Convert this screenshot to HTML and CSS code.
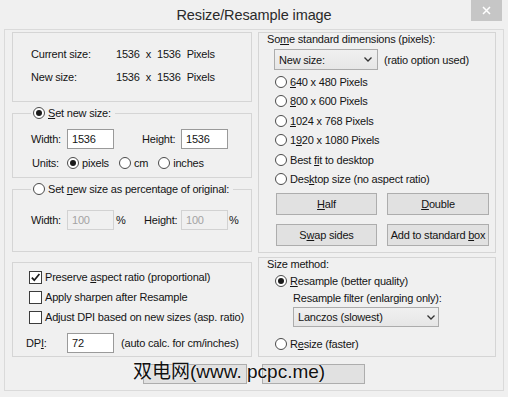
FILE: index.html
```html
<!DOCTYPE html>
<html lang="en">
<head>
    <meta charset="UTF-8">
    <meta name="viewport" content="width=device-width, initial-scale=1.0">
    <title>Resize/Resample image</title>

    <link rel="stylesheet" href="styles.css">
</head>
<body>

    <div class="window">

        <div class="titlebar">
            <span class="title">Resize/Resample image</span>
            <span class="close">
                <svg width="9" height="9" viewBox="0 0 9 9"><path d="M1 1 L8 8 M8 1 L1 8" stroke="#fff" stroke-width="1.5"/></svg>
            </span>
        </div>

        <div class="client">

            <div class="columns">

                <div class="col-left">

                    <div class="box info">
                        <div class="info-row"><span class="info-label">Current size:</span><span>1536</span><span>x</span><span>1536</span><span>Pixels</span></div>
                        <div class="info-row"><span class="info-label">New size:</span><span>1536</span><span>x</span><span>1536</span><span>Pixels</span></div>
                    </div>

                    <fieldset class="group new-size">
                        <legend><span class="radio on"></span><span><u>S</u>et new size:</span></legend>
                        <div class="g-body">
                            <div class="field-row">
                                <span class="field-label">Width:</span>
                                <span class="edit">1536</span>
                                <span class="field-label second">Height:</span>
                                <span class="edit">1536</span>
                            </div>
                            <div class="units-row">
                                <span class="units-label">Units:</span>
                                <span class="opt"><span class="radio on"></span>pixels</span>
                                <span class="opt"><span class="radio"></span>cm</span>
                                <span class="opt"><span class="radio"></span>inches</span>
                            </div>
                        </div>
                    </fieldset>

                    <fieldset class="group percent">
                        <legend><span class="radio"></span><span>Set <u>n</u>ew size as percentage of original:</span></legend>
                        <div class="g-body">
                            <div class="field-row">
                                <span class="field-label">Width:</span>
                                <span class="edit disabled">100</span>
                                <span class="pct">%</span>
                                <span class="field-label">Height:</span>
                                <span class="edit disabled">100</span>
                                <span class="pct last">%</span>
                            </div>
                        </div>
                    </fieldset>

                    <div class="box options">
                        <div class="check-row"><span class="check">
                            <svg width="11" height="11" viewBox="0 0 11 11"><path d="M1.8 5.6 L4.3 8.2 L9.4 2" fill="none" stroke="#1a1a1a" stroke-width="1.7"/></svg>
                        </span><span>Preserve <u>a</u>spect ratio (proportional)</span></div>
                        <div class="check-row"><span class="check"></span><span>Apply sharpen after Resample</span></div>
                        <div class="check-row"><span class="check"></span><span>Adjust DPI based on new sizes (asp. ratio)</span></div>
                        <div class="dpi-row">
                            <span class="dpi-label">DP<u>I</u>:</span>
                            <span class="edit">72</span>
                            <span class="dpi-note">(auto calc. for cm/inches)</span>
                        </div>
                    </div>

                </div>

                <div class="col-right">

                    <div class="box standard">
                        <div class="box-title">So<u>m</u>e standard dimensions (pixels):</div>
                        <div class="combo-row">
                            <span class="combo size-combo">New size:
                                <svg width="8" height="5" viewBox="0 0 8 5"><path d="M0.5 0.5 L4 4 L7.5 0.5" fill="none" stroke="#333" stroke-width="1.3"/></svg>
                            </span>
                            <span class="combo-note">(ratio option used)</span>
                        </div>
                        <div class="std-list">
                            <div class="opt-row"><span class="radio"></span><span><u>6</u>40 x 480 Pixels</span></div>
                            <div class="opt-row"><span class="radio"></span><span><u>8</u>00 x 600 Pixels</span></div>
                            <div class="opt-row"><span class="radio"></span><span><u>1</u>024 x 768 Pixels</span></div>
                            <div class="opt-row"><span class="radio"></span><span>1<u>9</u>20 x 1080 Pixels</span></div>
                            <div class="opt-row"><span class="radio"></span><span>Best <u>fi</u>t to desktop</span></div>
                            <div class="opt-row"><span class="radio"></span><span>Des<u>k</u>top size (no aspect ratio)</span></div>
                        </div>
                        <div class="btn-row">
                            <button class="btn"><u>H</u>alf</button>
                            <button class="btn"><u>D</u>ouble</button>
                        </div>
                        <div class="btn-row second">
                            <button class="btn">S<u>w</u>ap sides</button>
                            <button class="btn">Add to standard <u>b</u>ox</button>
                        </div>
                    </div>

                    <div class="box method">
                        <div class="box-title">Size method:</div>
                        <div class="opt-row method-opt"><span class="radio on"></span><span><u>R</u>esample (better quality)</span></div>
                        <div class="filter-label">Resample filter (enlarging only):</div>
                        <span class="combo filter-combo">Lanczos (slowest)
                            <svg width="8" height="5" viewBox="0 0 8 5"><path d="M0.5 0.5 L4 4 L7.5 0.5" fill="none" stroke="#333" stroke-width="1.3"/></svg>
                        </span>
                        <div class="opt-row method-opt resize"><span class="radio"></span><span>R<u>e</u>size (faster)</span></div>
                    </div>

                </div>

            </div>

            <div class="actions">
                <button class="btn ok"></button>
                <button class="btn cancel"></button>
            </div>

        </div>

        <div class="watermark">双电网(www. pcpc.me)</div>

    </div>

</body>
</html>
```

FILE: styles.css
```css
* {
    margin: 0px;
    padding: 0px;
    box-sizing: border-box;
}
html, body {
    width: 100%;
    height: 100%;
}
body {
    background-color: #f0f0f0;
    font-family: "Liberation Sans", Arial, sans-serif;
    font-size: 11px;
    letter-spacing: -0.2px;
    color: #141414;
}
u {
    text-decoration-thickness: 1px;
    text-underline-offset: 1px;
}
.window {
    width: 508px;
    height: 397px;
    position: relative;
    background-color: #f0f0f0;
}
.titlebar {
    height: 29px;
    display: flex;
    align-items: center;
    justify-content: center;
}
.title {
    font-size: 14.5px;
    letter-spacing: -0.1px;
    color: #2a2a2a;
    padding-top: 1px;
}
.close {
    position: absolute;
    top: 0px;
    right: 6px;
    width: 31px;
    height: 21px;
    background-color: #c6c6c6;
    display: flex;
    align-items: center;
    justify-content: center;
}
.client {
    margin: 0px 4px;
    height: 362px;
    border: 1px solid #dadada;
    padding: 2px 0px 0px 7px;
}
.columns {
    display: flex;
    gap: 6px;
}
.col-left {
    width: 240px;
    display: flex;
    flex-direction: column;
}
.col-right {
    width: 238px;
    display: flex;
    flex-direction: column;
}
.box {
    border: 1px solid #d5d5d5;
}
.info {
    height: 70px;
    padding: 13px 0px 0px 18px;
    display: flex;
    flex-direction: column;
    gap: 7px;
}
.info-row {
    display: flex;
    line-height: 16px;
}
.info-row span + span {
    margin-left: 6px;
}
.info-label {
    width: 79px;
}
.group {
    border: 1px solid #d5d5d5;
    min-width: 0px;
    margin-top: 4px;
}
.group legend {
    margin-left: 18px;
    padding: 0px 4px 0px 2px;
    height: 14px;
    line-height: 14px;
    display: flex;
    align-items: center;
}
.group legend .radio {
    margin-right: 3px;
}
.new-size .g-body {
    padding: 9px 0px 6px 18px;
}
.percent .g-body {
    padding: 14px 0px 21px 18px;
}
.field-row {
    display: flex;
    align-items: center;
    height: 20px;
}
.field-label {
    width: 36px;
}
.field-label.second {
    width: 39px;
    margin-left: 28px;
}
.percent .field-label + .edit + .pct + .field-label {
    width: 37px;
}
.pct {
    width: 30px;
    padding-left: 2px;
}
.pct.last {
    width: auto;
    padding-left: 1px;
}
.edit {
    width: 47px;
    height: 20px;
    border: 1px solid #9a9a9a;
    background-color: #ffffff;
    padding: 0px 4px;
    line-height: 18px;
}
.edit.disabled {
    border-color: #d2d2d2;
    background-color: #f0f0f0;
    color: #a3a3a3;
}
.units-row {
    display: flex;
    align-items: center;
    height: 16px;
    margin-top: 6px;
}
.units-label {
    width: 35px;
    margin-left: 1px;
}
.opt {
    display: flex;
    align-items: center;
    margin-right: 10px;
}
.radio {
    width: 12px;
    height: 12px;
    flex: none;
    border: 1px solid #4a4a4a;
    border-radius: 50%;
    background-color: #ffffff;
    display: inline-flex;
    align-items: center;
    justify-content: center;
    margin-right: 3px;
}
.radio.on::before {
    content: "";
    width: 6px;
    height: 6px;
    border-radius: 50%;
    background-color: #1a1a1a;
}
.options {
    margin-top: 10px;
    padding: 6px 0px 3px 16px;
    display: flex;
    flex-direction: column;
    gap: 4px;
}
.check-row {
    display: flex;
    align-items: center;
    height: 16px;
    line-height: 16px;
}
.check {
    width: 13px;
    height: 13px;
    flex: none;
    border: 1px solid #3c3c3c;
    background-color: #ffffff;
    margin-right: 3px;
    display: flex;
    align-items: center;
    justify-content: center;
}
.dpi-row {
    display: flex;
    align-items: center;
    height: 20px;
    margin-top: 4px;
    margin-left: -3px;
}
.dpi-label {
    width: 41px;
}
.dpi-note {
    margin-left: 7px;
}
.standard {
    padding: 0px 0px 6px 8px;
}
.box-title {
    line-height: 12px;
    height: 12px;
}
.combo-row {
    display: flex;
    align-items: center;
    margin-top: 4px;
    padding-left: 7px;
}
.combo {
    height: 21px;
    border: 1px solid #acacac;
    background: linear-gradient(#f0f0f0, #e6e6e6);
    display: flex;
    align-items: center;
    justify-content: space-between;
    padding: 0px 5px 0px 4px;
}
.size-combo {
    width: 104px;
}
.combo-note {
    margin-left: 6px;
}
.std-list {
    margin-top: 2px;
    padding-left: 8px;
}
.opt-row {
    display: flex;
    align-items: center;
    height: 19.5px;
}
.btn-row {
    display: flex;
    gap: 10px;
    margin-top: 4px;
    padding-left: 9px;
}
.btn-row.second {
    margin-top: 9px;
}
.btn {
    width: 101px;
    height: 22px;
    border: 1px solid #adadad;
    background-color: #e1e1e1;
    font: inherit;
    letter-spacing: inherit;
    color: inherit;
}
.btn-row .btn + .btn {
    width: 102px;
}
.method {
    margin-top: 4px;
    padding: 0px 0px 4px 8px;
}
.method-opt {
    height: 16px;
    margin-top: 3px;
    padding-left: 8px;
}
.method-opt.resize {
    margin-top: 9px;
}
.filter-label {
    line-height: 16px;
    margin-top: 1px;
    padding-left: 26px;
}
.filter-combo {
    width: 146px;
    height: 20px;
    margin: 1px 0px 0px 26px;
    padding-left: 4px;
    padding-right: 3px;
}
.actions {
    display: flex;
    gap: 15px;
    margin-top: 7px;
    padding-left: 131px;
}
.actions .btn {
    height: 20px;
}
.ok {
    width: 104px;
}
.cancel {
    width: 103px;
}
.watermark {
    position: absolute;
    left: 133px;
    top: 362px;
    font-family: "Liberation Sans", "Noto Sans CJK SC", sans-serif;
    font-size: 19px;
    line-height: 20px;
    letter-spacing: 0px;
    color: #111111;
    text-shadow: 0px 0px 2px #ffffff;
}
```
